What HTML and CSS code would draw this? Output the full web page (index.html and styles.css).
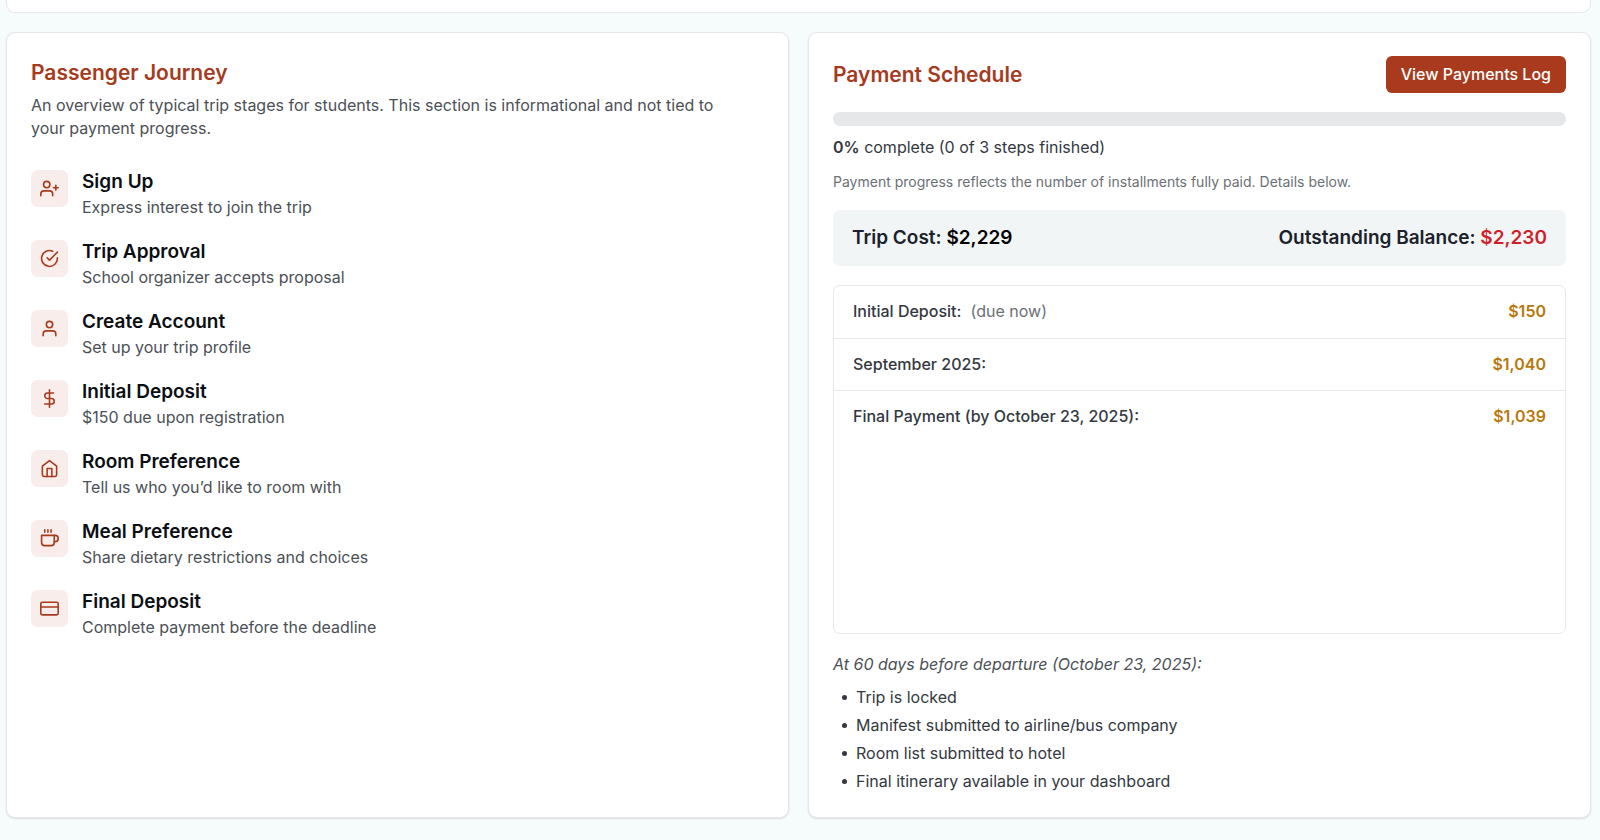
FILE: index.html
```html
<!DOCTYPE html>
<html lang="en">
<head>
<meta charset="utf-8">
<title>Trip Dashboard</title>
<meta name="viewport" content="width=device-width, initial-scale=1">
<link rel="stylesheet" href="styles.css">
</head>
<body>
<main class="page">
  <section class="card card-previous"></section>
  <div class="columns">
    <section class="card" aria-labelledby="journey-title">
      <h2 class="card-title" id="journey-title">Passenger Journey</h2>
      <p class="intro">An overview of typical trip stages for students. This section is informational and not tied to your payment progress.</p>
      <ol class="stages">
        <li class="stage">
          <span class="stage-icon"><svg class="icon" viewBox="0 0 24 24"><path d="M16 21v-2a4 4 0 0 0-4-4H5a4 4 0 0 0-4 4v2"/><circle cx="8.500" cy="7" r="4"/><path d="M20 8v6M23 11h-6"/></svg></span>
          <div><h3 class="stage-title">Sign Up</h3><p class="stage-text">Express interest to join the trip</p></div>
        </li>
        <li class="stage">
          <span class="stage-icon"><svg class="icon" viewBox="0 0 24 24"><path d="M22 11.080V12a10 10 0 1 1-5.930-9.140"/><path d="M22 4 12 14.010l-3-3"/></svg></span>
          <div><h3 class="stage-title">Trip Approval</h3><p class="stage-text">School organizer accepts proposal</p></div>
        </li>
        <li class="stage">
          <span class="stage-icon"><svg class="icon" viewBox="0 0 24 24"><path d="M20 21v-2a4 4 0 0 0-4-4H8a4 4 0 0 0-4 4v2"/><circle cx="12" cy="7" r="4"/></svg></span>
          <div><h3 class="stage-title">Create Account</h3><p class="stage-text">Set up your trip profile</p></div>
        </li>
        <li class="stage">
          <span class="stage-icon"><svg class="icon" viewBox="0 0 24 24"><path d="M12 1v22"/><path d="M17 5H9.500a3.500 3.500 0 0 0 0 7h5a3.500 3.500 0 0 1 0 7H6"/></svg></span>
          <div><h3 class="stage-title">Initial Deposit</h3><p class="stage-text">$150 due upon registration</p></div>
        </li>
        <li class="stage">
          <span class="stage-icon"><svg class="icon" viewBox="0 0 24 24"><path d="m3 9 9-7 9 7v11a2 2 0 0 1-2 2H5a2 2 0 0 1-2-2z"/><path d="M9 22V12h6v10"/></svg></span>
          <div><h3 class="stage-title">Room Preference</h3><p class="stage-text">Tell us who you’d like to room with</p></div>
        </li>
        <li class="stage">
          <span class="stage-icon"><svg class="icon" viewBox="0 0 24 24"><path d="M18 8h1a4 4 0 0 1 0 8h-1"/><path d="M2 8h16v9a4 4 0 0 1-4 4H6a4 4 0 0 1-4-4V8z"/><path d="M6 1v3M10 1v3M14 1v3"/></svg></span>
          <div><h3 class="stage-title">Meal Preference</h3><p class="stage-text">Share dietary restrictions and choices</p></div>
        </li>
        <li class="stage">
          <span class="stage-icon"><svg class="icon" viewBox="0 0 24 24"><rect x="1" y="4" width="22" height="16" rx="2"/><path d="M1 10h22"/></svg></span>
          <div><h3 class="stage-title">Final Deposit</h3><p class="stage-text">Complete payment before the deadline</p></div>
        </li>
      </ol>
    </section>

    <section class="card" aria-labelledby="payment-title">
      <header class="card-header">
        <h2 class="card-title" id="payment-title">Payment Schedule</h2>
        <button class="button" type="button">View Payments Log</button>
      </header>
      <div class="progress" role="progressbar" aria-label="Payment progress" aria-valuenow="0" aria-valuemin="0" aria-valuemax="100"></div>
      <p class="progress-text"><strong>0%</strong> complete (0 of 3 steps finished)</p>
      <p class="progress-note">Payment progress reflects the number of installments fully paid. Details below.</p>
      <div class="totals">
        <p>Trip Cost: <span class="cost">$2,229</span></p>
        <p>Outstanding Balance: <span class="balance">$2,230</span></p>
      </div>
      <div class="installments">
        <table class="installment-table">
          <tbody>
            <tr><th scope="row">Initial Deposit: <span class="due">(due now)</span></th><td>$150</td></tr>
            <tr><th scope="row">September 2025:</th><td>$1,040</td></tr>
            <tr><th scope="row">Final Payment (by October 23, 2025):</th><td>$1,039</td></tr>
          </tbody>
        </table>
      </div>
      <p class="deadline">At 60 days before departure (October 23, 2025):</p>
      <ul class="deadline-list">
        <li>Trip is locked</li>
        <li>Manifest submitted to airline/bus company</li>
        <li>Room list submitted to hotel</li>
        <li>Final itinerary available in your dashboard</li>
      </ul>
    </section>
  </div>
</main>
</body>
</html>
```
FILE: styles.css
```css
* {
  box-sizing: border-box;
}

body {
  margin: 0;
  background: #f6fbfc;
  color: #33383f;
  font-family: Inter, "Liberation Sans", sans-serif;
  font-size: 16px;
  line-height: 23px;
}

h2, h3, p, ol, ul {
  margin: 0;
  padding: 0;
}

.page {
  display: flex;
  flex-direction: column;
  gap: 19px;
  min-height: 100vh;
  padding: 0 9px 22px 6px;
}

.card {
  display: flex;
  flex-direction: column;
  padding: 23px 24px 24px;
  border: 1px solid #e5e7e9;
  border-radius: 9px;
  background: #fff;
  box-shadow: 0 1px 2px rgba(0, 0, 0, 0.12);
}

.card-previous {
  padding: 6px;
  border-top: 0;
  border-radius: 0 0 9px 9px;
  box-shadow: none;
}

.columns {
  display: grid;
  flex: 1;
  grid-template-columns: 1fr 1fr;
  gap: 19px;
}

.card-title {
  color: #a63a1e;
  font-size: 21px;
  font-weight: 600;
  line-height: 33px;
}

.intro {
  margin: 5px 0 28px;
  padding-right: 24px;
  color: #4b5056;
}

.stages {
  display: flex;
  flex-direction: column;
  gap: 19px;
  list-style: none;
}

.stage {
  display: flex;
  gap: 14px;
}

.stage-icon {
  display: grid;
  flex: none;
  place-items: center;
  width: 37px;
  height: 37px;
  margin-top: 2px;
  border-radius: 7px;
  background: #f8edeb;
}

.icon {
  width: 19px;
  height: 19px;
  fill: none;
  stroke: #a63a1e;
  stroke-width: 2;
  stroke-linecap: round;
  stroke-linejoin: round;
}

.stage-title {
  color: #0b0f14;
  font-size: 19px;
  font-weight: 600;
  line-height: 28px;
}

.stage-text {
  color: #4b5056;
}

.card-header {
  display: flex;
  align-items: center;
  justify-content: space-between;
  margin-bottom: 19px;
}

.button {
  padding: 7px 15px;
  border: 0;
  border-radius: 6px;
  background: #a93a1d;
  color: #fff;
  font: 500 16px/23px Inter, "Liberation Sans", sans-serif;
}

.progress {
  height: 14px;
  border-radius: 7px;
  background: #e5e7e9;
}

.progress-text {
  margin-top: 10px;
}

.progress-text strong {
  font-weight: 600;
}

.progress-note {
  margin: 13px 0 19px;
  color: #6b7075;
  font-size: 14px;
  line-height: 19px;
}

.totals {
  display: flex;
  justify-content: space-between;
  padding: 14px 19px;
  border-radius: 7px;
  background: #f1f5f6;
  color: #1b222b;
  font-size: 19px;
  font-weight: 600;
  line-height: 28px;
}

.cost {
  color: #000;
}

.balance {
  color: #cf1f2b;
}

.installments {
  flex: 1;
  margin: 19px 0;
  border: 1px solid #e5e7e9;
  border-radius: 7px;
}

.installment-table {
  width: 100%;
  border-collapse: collapse;
}

.installment-table th,
.installment-table td {
  height: 52px;
  padding: 0 19px;
  font-weight: 500;
  text-align: left;
}

.installment-table td {
  color: #b8780a;
  font-weight: 600;
  text-align: right;
}

.installment-table tr + tr {
  border-top: 1px solid #e5e7e9;
}

.due {
  margin-left: 5px;
  color: #6b7075;
  font-weight: 400;
}

.deadline {
  color: #4b5056;
  font-style: italic;
}

.deadline-list {
  display: flex;
  flex-direction: column;
  gap: 5px;
  margin-top: 10px;
  padding-left: 9px;
  list-style: none;
}

.deadline-list li {
  display: flex;
  align-items: center;
  gap: 9px;
}

.deadline-list li::before {
  width: 5px;
  height: 5px;
  border-radius: 50%;
  background: currentColor;
  content: "";
}
```
